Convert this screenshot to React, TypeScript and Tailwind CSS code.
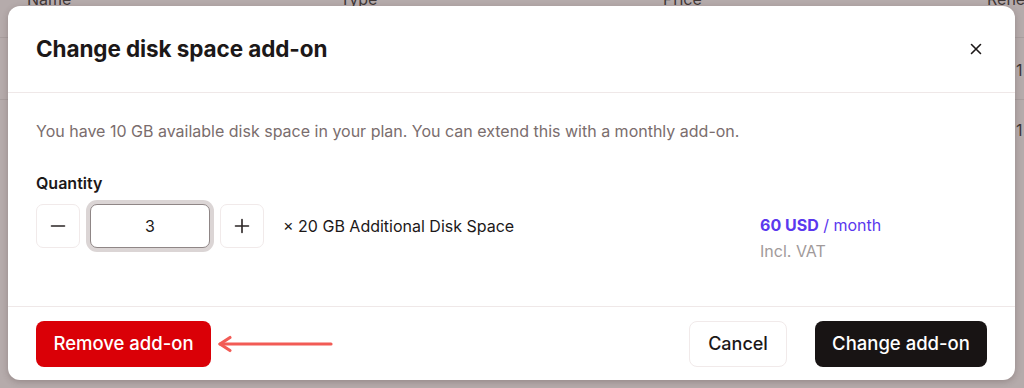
import React from "react";

function IconX() {
  return (
    <svg width="12" height="12" viewBox="0 0 12 12" fill="none" stroke="#1c1818" strokeWidth="1.6" strokeLinecap="round">
      <path d="M1.5 1.5 L10.5 10.5 M10.5 1.5 L1.5 10.5" />
    </svg>
  );
}

function IconMinus() {
  return (
    <svg width="16" height="16" viewBox="0 0 16 16" fill="none" stroke="#2a2424" strokeWidth="1.6" strokeLinecap="round">
      <path d="M1.5 8 H14.5" />
    </svg>
  );
}

function IconPlus() {
  return (
    <svg width="16" height="16" viewBox="0 0 16 16" fill="none" stroke="#2a2424" strokeWidth="1.6" strokeLinecap="round">
      <path d="M1.5 8 H14.5 M8 1.5 V14.5" />
    </svg>
  );
}

function Arrow() {
  return (
    <svg width="118" height="20" viewBox="0 0 118 20" fill="none" stroke="#f25b55" strokeWidth="3.2" strokeLinecap="round" strokeLinejoin="round">
      <path d="M3 10 H114" />
      <path d="M13 3.5 L3 10 L13 16.5" />
    </svg>
  );
}

export default function App() {
  const font = { fontFamily: "Inter, 'Noto Sans', sans-serif" };
  return (
    <div className="relative h-[388px] w-[1024px] overflow-hidden bg-[#b5abab]" style={font}>
      {/* background table (dimmed) */}
      <div className="text-[16px] text-[#3f3737]">
        <div className="relative -mt-[13px] flex h-[51px] items-start border-b border-[#a89e9e]">
          <span className="absolute left-[27px] top-0">Name</span>
          <span className="absolute left-[340px] top-0">Type</span>
          <span className="absolute left-[663px] top-0">Price</span>
          <span className="absolute left-[987px] top-0">Renewal</span>
        </div>
        <div className="relative h-[62px] border-b border-[#a89e9e]">
          <span className="absolute left-[1016px] top-[20px]">1</span>
        </div>
        <div className="relative h-[62px]">
          <span className="absolute left-[1016px] top-[18px]">1</span>
        </div>
      </div>

      {/* modal */}
      <div className="absolute left-[8px] top-[6px] flex h-[374px] w-[1007px] flex-col rounded-[12px] bg-white shadow-[0_2px_6px_rgba(60,40,40,0.25)]">
        <div className="flex h-[87px] shrink-0 items-center justify-between border-b border-[#efe8e8] pl-[28px] pr-[27px]">
          <h2 className="text-[22.5px] font-bold tracking-[-0.1px] text-[#1c1818]">Change disk space add-on</h2>
          <button className="flex h-6 w-6 items-center justify-center">
            <IconX />
          </button>
        </div>

        <div className="flex flex-1 flex-col px-[28px] pt-[26px]">
          <p className="text-[16px] leading-[24px] text-[#7a6d6d]">
            You have 10 GB available disk space in your plan. You can extend this with a monthly add-on.
          </p>
          <div className="mt-[29px] text-[16px] font-semibold leading-[22px] text-[#1c1818]">Quantity</div>
          <div className="mt-[10px] flex items-start">
            <div className="flex items-center gap-[10px]">
              <button className="flex h-[44px] w-[44px] items-center justify-center rounded-[7px] border border-[#f1eaea] bg-white">
                <IconMinus />
              </button>
              <div className="flex h-[44px] w-[120px] items-center justify-center rounded-[7px] border border-[#8f8686] bg-white text-[16px] text-[#1c1818] ring-[4px] ring-[#dbd5d5]">
                3
              </div>
              <button className="flex h-[44px] w-[44px] items-center justify-center rounded-[7px] border border-[#f1eaea] bg-white">
                <IconPlus />
              </button>
              <span className="ml-[9px] text-[16px] text-[#1c1818]">× 20 GB Additional Disk Space</span>
            </div>
            <div className="ml-auto mt-[9px] w-[227px] text-[16px] leading-[24px]">
              <div className="text-[#5b38ee]">
                <span className="font-bold">60 USD</span> / month
              </div>
              <div className="mt-[2px] text-[#a19a9a]">Incl. VAT</div>
            </div>
          </div>
        </div>

        <div className="flex h-[74px] shrink-0 items-center border-t border-[#efe8e8] px-[28px]">
          <button className="flex h-[46px] w-[175px] items-center justify-center rounded-[8px] bg-[#da0007] text-[18.5px] font-medium text-white">
            Remove add-on
          </button>
          <div className="ml-[6px]">
            <Arrow />
          </div>
          <div className="ml-auto flex items-center gap-[28px]">
            <button className="flex h-[46px] w-[98px] items-center justify-center rounded-[8px] border border-[#f1eaea] bg-white text-[18px] font-medium text-[#1c1818]">
              Cancel
            </button>
            <button className="flex h-[46px] w-[172px] items-center justify-center rounded-[8px] bg-[#181414] text-[18.5px] font-medium text-white">
              Change add-on
            </button>
          </div>
        </div>
      </div>
    </div>
  );
}
